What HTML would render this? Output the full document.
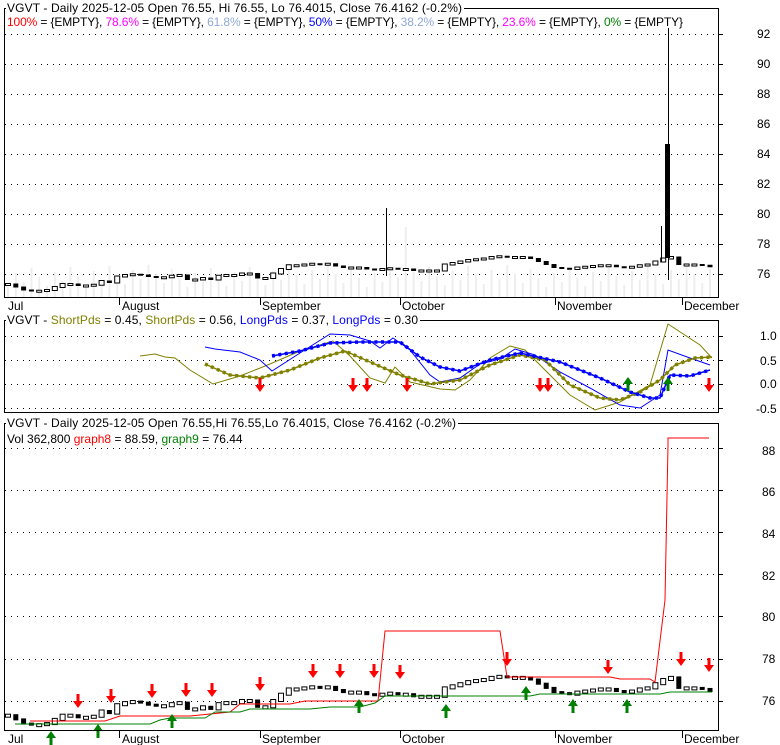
<!DOCTYPE html>
<html><head><meta charset="utf-8"><style>
html,body{margin:0;padding:0;background:#fff;}
svg{display:block;font-family:"Liberation Sans",sans-serif;font-size:12px;}
</style></head><body>
<svg id="s" width="780" height="745" xmlns="http://www.w3.org/2000/svg">
<rect width="780" height="745" fill="#fff"/>
<g id="g"></g>
<rect x="4.5" y="8.5" width="714" height="289" fill="none" stroke="#000"/>
<rect x="4.5" y="320.5" width="714" height="92" fill="none" stroke="#000"/>
<rect x="4.5" y="423.5" width="714" height="307" fill="none" stroke="#000"/>
<rect x="6" y="1" width="458" height="14" fill="#fff"/>
<text x="7" y="12" textLength="455">VGVT - Daily 2025-12-05 Open 76.55, Hi 76.55, Lo 76.4015, Close 76.4162 (-0.2%)</text>
<text x="7" y="26" textLength="676"><tspan fill="#ff0000">100%</tspan> = {EMPTY}, <tspan fill="#ff00ff">78.6%</tspan> = {EMPTY}, <tspan fill="#8fa8d8">61.8%</tspan> = {EMPTY}, <tspan fill="#0000ff">50%</tspan> = {EMPTY}, <tspan fill="#8fa8d8">38.2%</tspan> = {EMPTY}, <tspan fill="#ff00ff">23.6%</tspan> = {EMPTY}, <tspan fill="#008000">0%</tspan> = {EMPTY}</text>
<g font-size="12">
<text x="757" y="38">92</text><text x="757" y="68">90</text><text x="757" y="98">88</text><text x="757" y="128">86</text><text x="757" y="158">84</text><text x="757" y="188">82</text><text x="757" y="218">80</text><text x="757" y="248">78</text><text x="757" y="278">76</text>
<text x="8" y="310">Jul</text><text x="122" y="310">August</text><text x="262" y="310">September</text><text x="402" y="310">October</text><text x="557" y="310">November</text><text x="684" y="310">December</text>
</g>
<rect x="6" y="313" width="414" height="14" fill="#fff"/>
<text x="7" y="324" textLength="411">VGVT - <tspan fill="#808000">ShortPds</tspan> = 0.45, <tspan fill="#808000">ShortPds</tspan> = 0.56, <tspan fill="#0000ff">LongPds</tspan> = 0.37, <tspan fill="#0000ff">LongPds</tspan> = 0.30</text>
<text x="760" y="340">1.0</text><text x="760" y="365">0.5</text><text x="760" y="388">0.0</text><text x="756" y="413">-0.5</text>
<rect x="6" y="416" width="452" height="14" fill="#fff"/>
<text x="7" y="427" textLength="449">VGVT - Daily 2025-12-05 Open 76.55,Hi 76.55,Lo 76.4015, Close 76.4162 (-0.2%)</text>
<text x="7" y="443">Vol 362,800 <tspan fill="#ff0000">graph8</tspan> = 88.59, <tspan fill="#008000">graph9</tspan> = 76.44</text>
<text x="762" y="455">88</text><text x="762" y="496">86</text><text x="762" y="538">84</text><text x="762" y="580">82</text><text x="762" y="621">80</text><text x="762" y="663">78</text><text x="762" y="705">76</text>
<text x="8" y="743">Jul</text><text x="122" y="743">August</text><text x="262" y="743">September</text><text x="402" y="743">October</text><text x="557" y="743">November</text><text x="684" y="743">December</text>
</svg>
<script>
var NS="http://www.w3.org/2000/svg",G=document.getElementById("g");
function el(t,a){var e=document.createElementNS(NS,t);for(var k in a)e.setAttribute(k,a[k]);G.appendChild(e);return e;}
function line(x1,y1,x2,y2,c,w,d){var o={x1:x1,y1:y1,x2:x2,y2:y2,stroke:c,"stroke-width":w||1};if(d)o["stroke-dasharray"]=d;el("line",o);}
function poly(p,c,w,d){var o={points:p.map(function(a){return a.join(",")}).join(" "),fill:"none",stroke:c,"stroke-width":w||1};if(d)o["stroke-dasharray"]=d;el("polyline",o);}
[34,64,94,124,154,184,214,244,274].forEach(function(y){line(5,y+.5,718,y+.5,"#000",1,"1,5");line(718,y+.5,723,y+.5,"#000");});
[336,360,384,408].forEach(function(y){line(5,y+.5,718,y+.5,"#000",1,"1,5");line(718,y+.5,723,y+.5,"#000");});
[448,490,532,574,616,659,701].forEach(function(y){line(5,y+.5,718,y+.5,"#000",1,"1,5");line(718,y+.5,723,y+.5,"#000");});
[119,260,400,555,682].forEach(function(x){line(x+.5,297,x+.5,305,"#000");line(x+.5,730,x+.5,738,"#000");});
var P=[75.3,75.1,74.9,74.85,74.85,74.9,75.1,75.3,75.3,75.2,75.2,75.25,75.5,75.4,75.8,
75.9,75.95,75.9,75.8,75.75,75.75,75.85,75.9,75.6,75.6,75.7,75.6,75.85,75.9,75.9,76.0,76.0,75.7,75.7,76.0,76.3,
76.55,76.55,76.6,76.65,76.6,76.65,76.5,76.4,76.4,76.4,76.3,76.25,76.3,76.35,76.3,76.3,76.2,76.2,76.2,76.2,76.6,
76.7,76.8,76.9,76.95,77.0,77.1,77.15,77.1,77.1,77.1,77.0,76.8,76.6,76.4,76.35,76.3,76.4,76.45,76.5,76.55,76.55,76.45,76.4,
76.45,76.55,76.6,76.8,77.0,77.1,76.6,76.6,76.6,76.55,76.45];
var n=P.length,dx=(710-8)/(n-1);
for(var i=0;i<n;i++){
 var x=8+i*dx,c=P[i],o=i?P[i-1]:c;
 var vh=10+((i*37)%23);if(i==51)vh=70;if(i==100)vh=60;if(i==104)vh=45;
 el("rect",{x:x-1,y:297-vh,width:2,height:vh,fill:"#eeeeee"});
 var y1=274-(Math.max(o,c)-76)*15,y2=274-(Math.min(o,c)-76)*15;
 el("rect",{x:x-2.5,y:y1-1,width:5,height:Math.max(2,y2-y1+1),fill:c>=o?"#fff":"#000",stroke:"#000","stroke-width":c>=o?1:0});
 var z1=701-(Math.max(o,c)-76)*21,z2=701-(Math.min(o,c)-76)*21;
 el("rect",{x:x-2.5,y:z1-1.5,width:5,height:Math.max(3,z2-z1+2),fill:c>=o?"#fff":"#000",stroke:"#000","stroke-width":c>=o?1:0});
}
line(386.5,208,386.5,276,"#000");line(668.5,28,668.5,280,"#000");el("rect",{x:665,y:144,width:5,height:114,fill:"#000"});line(661.5,226,661.5,262,"#000");
poly([[140,356],[155,354],[165,357],[175,358],[190,370],[213,384],[240,376],[270,364],[300,351],[333,341],[350,356],[370,378],[385,383],[395,367],[410,382],[440,389],[455,390],[470,380],[490,358],[510,346],[525,350],[545,370],[570,395],[595,410],[620,402],[650,385],[668,324],[700,345],[712,358]],"#808000");
poly([[205,347],[215,349],[240,352],[260,360],[272,371],[300,353],[330,334],[350,335],[370,341],[380,348],[393,338],[410,350],[430,375],[440,382],[460,378],[480,364],[500,359],[515,349],[535,355],[560,372],[590,388],[620,405],[640,408],[660,395],[668,350],[690,358],[710,365]],"#0000ff");
var S2=[[205,364],[230,375],[260,378],[290,370],[320,358],[345,351],[370,362],[400,375],[430,384],[460,380],[490,365],[520,355],[545,360],[570,385],[600,398],[620,400],[640,392],[660,380],[675,365],[695,358],[712,357]];
var L2=[[272,356],[300,351],[330,343],[360,342],[400,342],[420,357],[440,367],[460,371],[490,360],[520,353],[560,362],[600,378],[630,392],[650,398],[660,398],[670,375],[690,376],[710,370]];
poly(S2,"#808000",1.5);poly(S2,"#808000",3.5,"3,3.5");
poly(L2,"#0000ff",1.5);poly(L2,"#0000ff",3.5,"3,3.5");
function dn(x,y){el("polygon",{points:(x-1.5)+","+(y-14)+" "+(x+1.5)+","+(y-14)+" "+(x+1.5)+","+(y-7)+" "+(x+5)+","+(y-7)+" "+x+","+y+" "+(x-5)+","+(y-7)+" "+(x-1.5)+","+(y-7),fill:"#ff0000"});}
function up(x,y){el("polygon",{points:(x-1.5)+","+(y+14)+" "+(x+1.5)+","+(y+14)+" "+(x+1.5)+","+(y+7)+" "+(x+5)+","+(y+7)+" "+x+","+y+" "+(x-5)+","+(y+7)+" "+(x-1.5)+","+(y+7),fill:"#008000"});}
[260,353,367,407,540,548,709].forEach(function(x){dn(x,392);});
[628,668].forEach(function(x){up(x,377);});
poly([[30,721],[52,721],[105,721],[120,716],[190,716],[230,712],[240,704],[290,704],[305,701],[378,701],[385,631],[500,631],[507,677],[610,677],[620,679],[650,679],[655,682],[665,600],[668,445],[668,438],[709,438]],"#ff0000");
poly([[15,724],[150,724],[160,720],[170,718],[205,718],[215,712],[240,712],[250,709],[310,709],[330,707],[360,707],[375,703],[385,696],[530,696],[540,694],[660,694],[670,692],[712,692]],"#008000");
[[78,708],[111,703],[152,698],[186,697],[212,697],[260,691],[313,678],[340,678],[374,678],[400,679],[507,666],[608,674],[681,666],[709,672]].forEach(function(a){dn(a[0],a[1]);});
[[51,731],[98,724],[172,714],[359,699],[446,704],[526,686],[573,699],[627,699]].forEach(function(a){up(a[0],a[1]);});
</script>
</body></html>
